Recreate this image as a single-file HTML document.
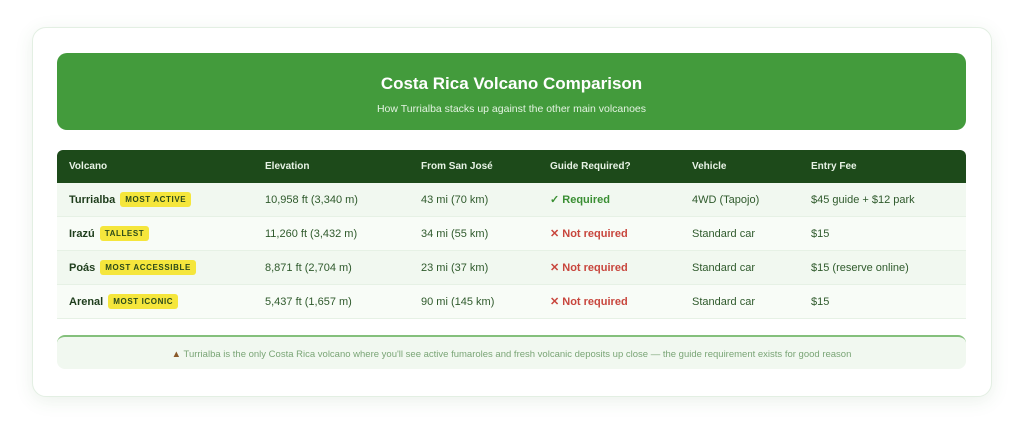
<!DOCTYPE html><html><head><style>
body{margin:0;width:1024px;height:425px;background:#fff;font-family:"Liberation Sans",sans-serif;position:relative;overflow:hidden}
.card{position:absolute;left:32px;top:27px;width:958px;height:368px;border:1px solid #e3efe3;border-radius:14px;box-shadow:0 4px 18px rgba(60,120,60,.10);background:#fff}
.hd{position:absolute;left:57px;top:53px;width:909px;height:77px;background:#439b3c;border-radius:10px;color:#fff;text-align:center}
.hd h1{margin:0;padding-top:21px;font-size:17px;font-weight:bold}
.hd p{margin:9px 0 0;font-size:10.5px;color:#e4f3e2}
table{position:absolute;left:57px;top:150px;width:909px;border-collapse:collapse;font-size:11px;color:#2f5a2c}
th{background:#1d4a1a;color:#e8f3e6;text-align:left;font-weight:bold;height:33px;padding:0 0 0 12px;font-size:10px}
th:first-child{border-radius:6px 0 0 0}th:last-child{border-radius:0 6px 0 0}
td{height:33px;padding:0 0 0 12px;border-bottom:1px solid #e6f1e5}
tr:nth-child(even) td{background:#f1f8f0}tr:nth-child(odd) td{background:#f8fcf7}
td b{color:#1e3d1c}
.tag{display:inline-block;background:#f5e63c;color:#2b4a1a;font-size:8px;font-weight:bold;letter-spacing:.6px;padding:3px 5px;border-radius:3px;margin-left:5px;vertical-align:1px}
.ok{color:#3a8f33;font-weight:bold}.no{color:#c8463d;font-weight:bold}
.note{position:absolute;left:57px;top:335px;width:909px;height:34px;border-top:2px solid #84c07c;border-radius:8px;background:#f1f8f0;text-align:center;font-size:9.5px;color:#7aa576;line-height:36px;box-sizing:border-box}
</style></head><body>
<div class="card"></div>
<div class="hd"><h1>Costa Rica Volcano Comparison</h1><p>How Turrialba stacks up against the other main volcanoes</p></div>
<table>
<tr><th style="width:184px">Volcano</th><th style="width:144px">Elevation</th><th style="width:117px">From San José</th><th style="width:130px">Guide Required?</th><th style="width:107px">Vehicle</th><th>Entry Fee</th></tr>
<tr><td><b>Turrialba</b><span class="tag">MOST ACTIVE</span></td><td>10,958 ft (3,340 m)</td><td>43 mi (70 km)</td><td class="ok">✓ Required</td><td>4WD (Tapojo)</td><td>$45 guide + $12 park</td></tr>
<tr><td><b>Irazú</b><span class="tag">TALLEST</span></td><td>11,260 ft (3,432 m)</td><td>34 mi (55 km)</td><td class="no">✕ Not required</td><td>Standard car</td><td>$15</td></tr>
<tr><td><b>Poás</b><span class="tag">MOST ACCESSIBLE</span></td><td>8,871 ft (2,704 m)</td><td>23 mi (37 km)</td><td class="no">✕ Not required</td><td>Standard car</td><td>$15 (reserve online)</td></tr>
<tr><td><b>Arenal</b><span class="tag">MOST ICONIC</span></td><td>5,437 ft (1,657 m)</td><td>90 mi (145 km)</td><td class="no">✕ Not required</td><td>Standard car</td><td>$15</td></tr>
</table>
<div class="note"><span style="color:#8a5a2a">▲</span> Turrialba is the only Costa Rica volcano where you'll see active fumaroles and fresh volcanic deposits up close — the guide requirement exists for good reason</div>
</body></html>
